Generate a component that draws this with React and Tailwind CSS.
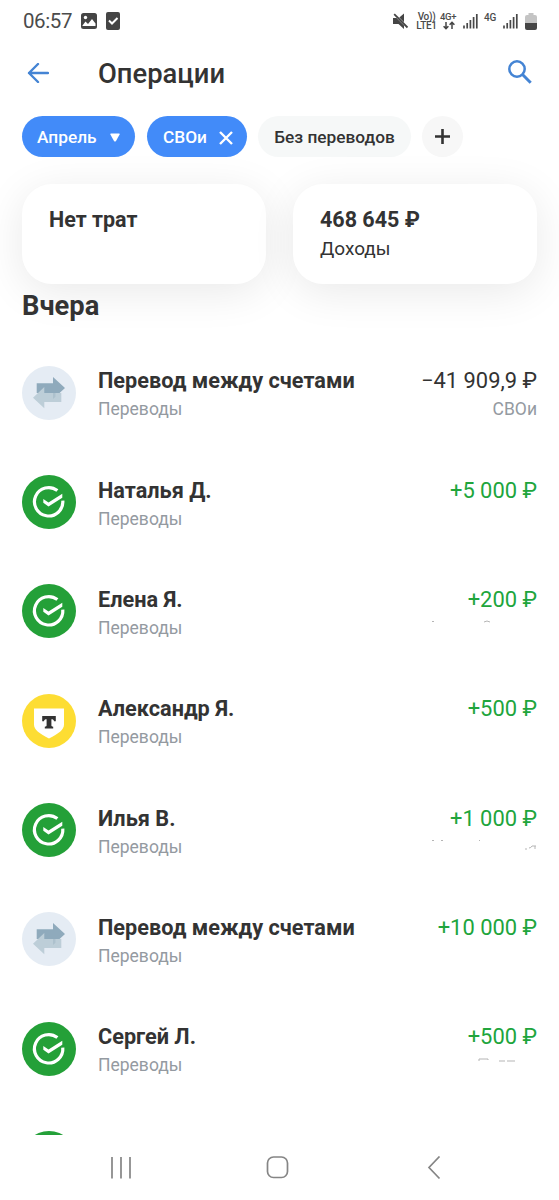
import React from "react";

const operations = [
  { id: 1, icon: "transfer", title: "Перевод между счетами", amount: "−41 909,9 ₽", account: "СВОи" },
  { id: 2, icon: "sber", title: "Наталья Д.", amount: "+5 000 ₽", income: true },
  { id: 3, icon: "sber", title: "Елена Я.", amount: "+200 ₽", income: true, trace: "dots" },
  { id: 4, icon: "tbank", title: "Александр Я.", amount: "+500 ₽", income: true },
  { id: 5, icon: "sber", title: "Илья В.", amount: "+1 000 ₽", income: true, trace: "tail" },
  { id: 6, icon: "transfer", title: "Перевод между счетами", amount: "+10 000 ₽", income: true },
  { id: 7, icon: "sber", title: "Сергей Л.", amount: "+500 ₽", income: true, trace: "top" },
];

const TransferIcon = () => (
  <svg viewBox="0 0 54 54" className="size-[54px] shrink-0">
    <circle cx="27" cy="27" r="27" fill="#e5ecf4" />
    <path d="M14.7 17.3H31V10.9L43 22L31 33V27H14.7z" fill="#8faabc" />
    <path d="M22.3 21V27H39.3V36H22.3V42.3L11 31.7z" fill="#bdced8" />
    <path d="M22.3 27H31V33L33.5 30.7V27z" fill="#adc1cd" />
  </svg>
);

const SberIcon = () => (
  <svg viewBox="0 0 54 54" className="size-[54px] shrink-0" fill="none">
    <circle cx="27" cy="27" r="27" fill="#24a038" />
    <path d="M35.4 15.6A14.2 14.2 0 1 0 40.8 25.6" stroke="#fff" strokeWidth="3.2" />
    <path d="M21.3 24L26.5 27.6L40.3 18.8V22.8L26.5 31.4L21.3 27.8z" fill="#fff" />
  </svg>
);

const TBankIcon = () => (
  <svg viewBox="0 0 54 54" className="size-[54px] shrink-0">
    <circle cx="27" cy="27" r="27" fill="#fddd33" />
    <path d="M12 14.5H42V30.5C42 36 36.5 39.5 27 44.5C17.5 39.5 12 36 12 30.5z" fill="#fff" />
    <path
      d="M20.2 22H33.8V27.3H32C31.8 25.9 31 25.3 29.4 25.3V31.3C29.4 32.3 30 32.7 31.2 32.7V34.5H22.8V32.7C24 32.7 24.6 32.3 24.6 31.3V25.3C23 25.3 22.2 25.9 22 27.3H20.2z"
      fill="#333"
    />
  </svg>
);

const icons = { transfer: TransferIcon, sber: SberIcon, tbank: TBankIcon };

const traces = {
  dots: "M1 5.5h2M53 6q3-2 6 0",
  tail: "M1 5.5h2M10 5.5h2M48 5.5h1M94 14h2M98 13q2 0 3-2h4M104 11v3",
  top: "M48 8v-2h9v1M68 8h6M76 8h8",
};

const Signal = () => (
  <svg viewBox="0 0 15 16" className="h-4 w-[15px]" stroke="#484848" strokeWidth="1.7">
    <path d="M1 12.5V15.5M4.2 10V15.5M7.4 7V15.5M10.6 4V15.5M13.8 1V15.5" />
  </svg>
);

const StatusBar = () => (
  <div className="flex h-[42px] items-center pl-[23px] pr-[22px] text-[#4b4b4b]">
    <span className="w-[58px] text-[20.5px] leading-none tracking-[-0.4px]">06:57</span>
    <svg viewBox="0 0 16 16" className="size-4">
      <rect width="16" height="16" rx="2.5" fill="#454545" />
      <circle cx="4.5" cy="4.5" r="1.7" fill="#fff" />
      <path d="M1.5 12.5L4.5 8.5 7 11 11 6 14.5 10.5V13H1.5z" fill="#fff" />
    </svg>
    <svg viewBox="0 0 14 18" className="ml-[9px] h-[18px] w-3.5">
      <rect width="14" height="18" rx="2" fill="#454545" />
      <path d="M3 8.5L6 11.5L11.5 6" fill="none" stroke="#fff" strokeWidth="2" />
    </svg>
    <div className="ml-auto flex items-center">
      <svg viewBox="0 0 16 16" className="size-4" fill="#454545">
        <path d="M0 5H3.5L11 12.5V16L5.5 11H0zM6.3 4.6L11 0.5V9.3z" />
        <path d="M1.2 1.2L14.5 14.5" stroke="#454545" strokeWidth="1.8" />
      </svg>
      <div className="ml-[7px] w-[21px] text-center text-[10px] font-medium leading-[9px] tracking-[-0.3px]">
        <div>Vo))</div>
        <div>LTE1</div>
      </div>
      <div className="ml-[3px] w-[17px] text-[9.5px] font-medium leading-[9px] tracking-[-0.3px]">
        <div>4G+</div>
        <svg viewBox="0 0 12 9" className="mx-auto h-[9px] w-3" fill="none" stroke="#454545" strokeWidth="1.5">
          <path d="M3 1V7.5M0.6 5.2L3 7.6L5.4 5.2M9 8V1.5M6.6 3.8L9 1.4L11.4 3.8" />
        </svg>
      </div>
      <div className="ml-1.5">
        <Signal />
      </div>
      <span className="ml-[6px] w-[14px] pb-[7px] text-[10px] font-medium leading-none tracking-[-0.3px]">4G</span>
      <div className="ml-[5px]">
        <Signal />
      </div>
      <svg viewBox="0 0 12 17" className="ml-[7px] h-[17px] w-3">
        <path d="M3.5 0h5v2H10a2 2 0 0 1 2 2v6H0V4a2 2 0 0 1 2-2h1.5z" fill="#c4c4c4" />
        <path d="M0 10h12v5a2 2 0 0 1-2 2H2a2 2 0 0 1-2-2z" fill="#454545" />
      </svg>
    </div>
  </div>
);

const Header = () => (
  <header className="flex h-[64px] items-center pl-[27px] pr-[27px]">
    <svg viewBox="0 0 22 20" className="mb-[2px] h-5 w-[22px]" fill="none" stroke="#4484d4" strokeWidth="2.4">
      <path d="M21 10H2M11 1L2 10L11 19" strokeLinecap="round" strokeLinejoin="round" />
    </svg>
    <h1 className="ml-[49px] pt-[2px] text-[27.4px] font-medium leading-none text-[#333]">Операции</h1>
    <svg viewBox="0 0 24 24" className="mb-[4px] ml-auto size-6" fill="none" stroke="#4484d4">
      <circle cx="9" cy="9" r="7.7" strokeWidth="2.5" />
      <path d="M14.5 14.5L22.7 22.7" strokeWidth="3" />
    </svg>
  </header>
);

const Filters = () => (
  <div className="mt-[10px] flex h-[41px] shrink-0 pl-[22px] text-[17.3px] font-medium text-[#333]">
    <button className="flex w-[113px] items-center rounded-full bg-[#428bf9] pl-[15px] pt-[2px] text-white">
      <span className="w-[60px] text-left">Апрель</span>
      <svg viewBox="0 0 10 9" className="ml-[13px] h-[9px] w-2.5" fill="#fff">
        <path d="M1 0.5H9Q10 0.5 9.6 1.5L6 8Q5 9 4 8L0.4 1.5Q0 0.5 1 0.5z" />
      </svg>
    </button>
    <button className="ml-[12px] flex w-[100px] items-center rounded-full bg-[#428bf9] pl-[16px] pt-[2px] text-white">
      <span className="w-[44px] text-left">СВОи</span>
      <svg viewBox="0 0 14 14" className="ml-[12px] size-3.5" stroke="#fff" strokeWidth="2.4">
        <path d="M1 1L13 13M13 1L1 13" />
      </svg>
    </button>
    <button className="ml-[11px] w-[153px] rounded-full bg-[#f6f8f8] pt-[2px]">Без переводов</button>
    <button className="ml-[11px] flex w-[41px] items-center justify-center rounded-full bg-[#f7f7f7]">
      <svg viewBox="0 0 15 15" className="size-[15px]" stroke="#333" strokeWidth="2.6">
        <path d="M7.5 0V15M0 7.5H15" />
      </svg>
    </button>
  </div>
);

const SummaryCard = ({ title, label }) => (
  <div className="h-[100px] rounded-[30px] bg-white pl-[27px] pt-[22px] shadow-[0_8px_44px_rgba(0,0,0,0.09)]">
    <p className="text-[21.5px] font-bold leading-[27px]">{title}</p>
    {label && <p className="mt-[4px] text-[19px] leading-6">{label}</p>}
  </div>
);

const OperationRow = ({ item }) => {
  const Icon = icons[item.icon];
  return (
    <li className="flex h-[109.35px] items-center px-[22px]">
      <Icon />
      <div className="ml-[22px] pt-[4px]">
        <p className="text-[21.7px] font-bold leading-[26px]">{item.title}</p>
        <p className="mt-[3px] text-[17.5px] leading-6 text-[#949aa1]">Переводы</p>
      </div>
      <div className="relative ml-auto pt-[4px] text-right">
        <p className={`text-[21.9px] leading-[26px] ${item.income ? "text-[#20a53c]" : "text-[#333]"}`}>
          {item.amount}
        </p>
        <p className="mt-[3px] h-6 text-[17.5px] leading-6 text-[#949aa1]">{item.account}</p>
        {item.trace && (
          <svg
            viewBox="0 0 106 24"
            className="absolute bottom-0 right-0 h-6 w-[106px]"
            fill="none"
            stroke="#b5b5b5"
            strokeWidth="1"
          >
            <path d={traces[item.trace]} />
          </svg>
        )}
      </div>
    </li>
  );
};

const NavBar = () => (
  <nav className="flex h-[65px] items-center pl-[110px]">
    <svg viewBox="0 0 335 24" className="h-6 w-[335px]" fill="none" stroke="#858585" strokeWidth="1.7">
      <path d="M2 1V22.5M11 1V22.5M20 1V22.5" />
      <rect x="157.5" y="1" width="20" height="20.5" rx="6" />
      <path d="M329.5 0.5L319 11.5L329.5 22.5" />
    </svg>
  </nav>
);

const App = () => {
  return (
    <div className="flex h-[1200px] w-[559px] flex-col overflow-hidden bg-white font-[Roboto,sans-serif] text-[#333]">
      <StatusBar />
      <Header />
      <Filters />
      <main className="mt-[27px] h-[951px]">
        <div className="grid grid-cols-2 gap-[27px] px-[22px]">
          <SummaryCard title="Нет трат" />
          <SummaryCard title="468 645 ₽" label="Доходы" />
        </div>
        <h2 className="relative mt-[5px] pl-[22px] text-[27.3px] font-bold leading-[34px]">Вчера</h2>
        <ul className="mt-[15px] h-[797px] overflow-hidden">
          {operations.map((item) => (
            <OperationRow key={item.id} item={item} />
          ))}
          <li className="px-[22px] pt-[28px]">
            <SberIcon />
          </li>
        </ul>
      </main>
      <NavBar />
    </div>
  );
};

export default App;
